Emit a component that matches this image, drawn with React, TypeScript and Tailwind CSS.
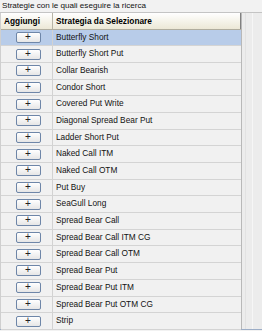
import React from "react";

const rows = [
  "Butterfly Short",
  "Butterfly Short Put",
  "Collar Bearish",
  "Condor Short",
  "Covered Put Write",
  "Diagonal Spread Bear Put",
  "Ladder Short Put",
  "Naked Call ITM",
  "Naked Call OTM",
  "Put Buy",
  "SeaGull Long",
  "Spread Bear Call",
  "Spread Bear Call ITM CG",
  "Spread Bear Call OTM",
  "Spread Bear Put",
  "Spread Bear Put ITM",
  "Spread Bear Put OTM CG",
  "Strip",
];

export default function App() {
  return (
    <div
      className="w-[262px] h-[331px] bg-[#f2f2f2] overflow-hidden text-black"
      style={{ fontFamily: '"Liberation Sans", Arial, sans-serif' }}
    >
      <div className="h-[12px] pl-[2px] text-[8.1px] leading-[11px] text-[#111]">
        Strategie con le quali eseguire la ricerca
      </div>
      <div className="flex h-[318px] border-t border-[#c4c4c4] border-b border-b-[#9cadc6]">
        <div className="w-[242px] flex flex-col border-l border-[#cfcfcf] border-r border-r-[#b8b8b8]">
          <div className="flex h-[16.5px] shrink-0 bg-gradient-to-b from-[#ffffff] to-[#ece8d6] border-b border-[#b0ad9e] text-[8.3px] font-bold leading-[16px]">
            <div className="w-[52px] shrink-0 pl-[3px] border-r border-[#b7b4a6]">Aggiungi</div>
            <div className="flex-1 pl-[3px] border-r border-[#808080]">Strategia da Selezionare</div>
          </div>
          {rows.map((r, i) => (
            <div
              key={r}
              className={
                "flex h-[16.7px] shrink-0 border-b border-[#d4d4d4] text-[8.3px] leading-[15.7px] " +
                (i === 0 ? "bg-[#b8cce9]" : "bg-[#f1f1f1]")
              }
            >
              <div className="w-[52px] shrink-0 flex items-center justify-center border-r border-[#d2d2d2]">
                <div className="w-[25px] h-[11px] ml-[3px] rounded-[2px] border border-[#6e86a8] bg-gradient-to-b from-[#ffffff] to-[#e6e6e6] flex items-center justify-center text-[10px] leading-none text-[#222] pb-[1px]">
                  +
                </div>
              </div>
              <div className="flex-1 pl-[3px] whitespace-nowrap overflow-hidden text-[#111]">{r}</div>
            </div>
          ))}
        </div>
        <div className="flex-1 bg-[#ececec] flex">
          <div className="w-[4px] border-r border-[#e2e2e2]" />
          <div className="w-[7px] border-r border-[#f6f6f6]" />
        </div>
      </div>
    </div>
  );
}
